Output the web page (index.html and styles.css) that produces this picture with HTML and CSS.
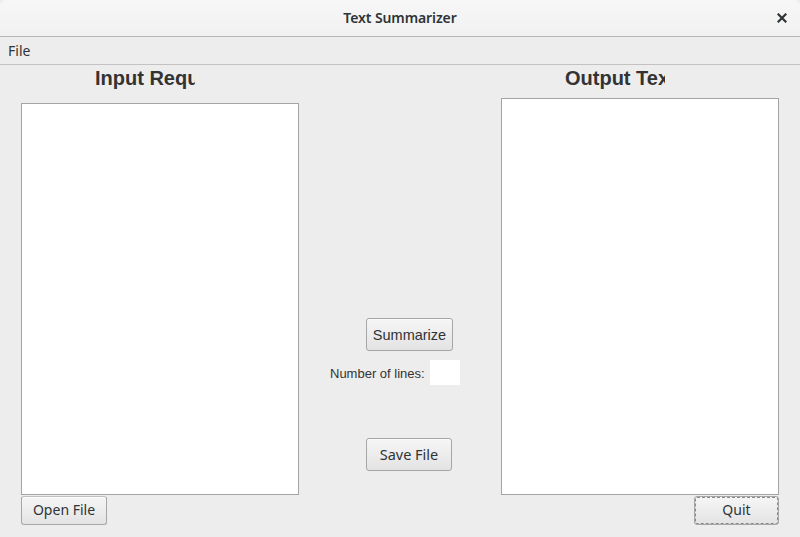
FILE: index.html
```html
<!DOCTYPE html>
<html>
<head>
<meta charset="utf-8">
<link rel="stylesheet" href="styles.css">
</head>
<body>
<div class="window">
  <div class="titlebar">
    <span class="title">Text Summarizer</span>
    <span class="close">
      <svg width="10" height="10" viewBox="0 0 10 10"><path d="M1.5 1.5 L8.5 8.5 M8.5 1.5 L1.5 8.5" stroke="#2e3436" stroke-width="2.2" stroke-linecap="square"/></svg>
    </span>
  </div>
  <div class="menubar"><span class="menu-item">File</span></div>
  <div class="main">
    <div class="col col-left">
      <div class="label label-in"><span>Input Request</span></div>
      <div class="textbox textbox-in"></div>
      <div class="btn btn-open">Open File</div>
    </div>
    <div class="col col-mid">
      <div class="btn btn-summ">Summarize</div>
      <div class="lines-row">
        <span class="lines-label">Number of lines:</span>
        <span class="lines-input"></span>
      </div>
      <div class="btn btn-save">Save File</div>
    </div>
    <div class="col col-right">
      <div class="label label-out"><span>Output Text</span></div>
      <div class="textbox textbox-out"></div>
      <div class="btn btn-quit">Quit</div>
    </div>
  </div>
</div>
</body>
</html>
```
FILE: styles.css
```css
* { box-sizing: border-box; }
html, body { margin: 0; padding: 0; }
body {
  width: 800px;
  height: 537px;
  overflow: hidden;
  background: #ededed;
  font-family: "Noto Sans", "DejaVu Sans", sans-serif;
  color: #2e3436;
}
.window {
  width: 800px;
  height: 537px;
  background: #ededed;
}
.titlebar {
  height: 37px;
  background: linear-gradient(#f7f7f7, #f1f1f1);
  border-bottom: 1px solid #b8b8b8;
  border-radius: 6px 6px 0 0;
  display: flex;
  align-items: center;
  justify-content: center;
  position: relative;
}
.title {
  font-size: 14px;
  font-weight: 600;
  color: #2e3436;
  letter-spacing: -0.1px;
  margin-top: -1px;
}
.close {
  position: absolute;
  right: 13px;
  top: 13px;
  width: 10px;
  height: 10px;
  display: flex;
}
.menubar {
  height: 28px;
  border-bottom: 1px solid #c2c2c2;
  display: flex;
  align-items: center;
  padding-left: 8px;
  background: #ededed;
}
.menu-item {
  font-size: 14px;
  color: #2e3436;
}
.main {
  display: flex;
  padding-left: 21px;
}
.col { display: flex; flex-direction: column; }
.col-left, .col-right { width: 278px; }
.col-mid { width: 202px; }
.label {
  width: 100px;
  height: 26px;
  line-height: 26px;
  overflow: hidden;
  white-space: nowrap;
  margin-top: 0;
  font-family: "Liberation Sans", Arial, sans-serif;
  font-weight: bold;
  font-size: 20px;
  color: #333333;
}
.label-in { margin-left: 74px; }
.label-out { margin-left: 64px; }
.textbox {
  background: #ffffff;
  border: 1px solid #a4a4a4;
  width: 278px;
}
.textbox-in { margin-top: 12px; height: 392px; }
.textbox-out { margin-top: 7px; height: 397px; }
.btn {
  display: flex;
  align-items: center;
  justify-content: center;
  border: 1px solid #a6a6a6;
  border-radius: 3px;
  background: linear-gradient(#f6f6f6, #e3e3e3);
  font-size: 14px;
  color: #2e3436;
  box-shadow: 0 1px 0 rgba(255,255,255,0.6) inset;
}
.btn-open {
  width: 86px;
  height: 29px;
  margin-top: 1px;
  border-top-color: #c0c0c0;
  padding-bottom: 2px;
}
.btn-quit {
  width: 85px;
  height: 29px;
  margin-top: 1px;
  margin-left: 193px;
  outline: 1px dashed #8a8a8a;
  outline-offset: -2px;
  padding-bottom: 2px;
}
.btn-summ {
  width: 87px;
  height: 33px;
  margin-top: 253px;
  margin-left: 67px;
  font-family: "Liberation Sans", Arial, sans-serif;
  font-size: 14.5px;
}
.lines-row {
  display: flex;
  align-items: center;
  margin-top: 9px;
  margin-left: 31px;
  height: 25px;
}
.lines-label {
  font-family: "Liberation Sans", Arial, sans-serif;
  font-size: 13px;
  color: #333333;
  width: 100px;
  margin-top: 1px;
}
.lines-input {
  width: 30px;
  height: 25px;
  background: #ffffff;
}
.btn-save {
  width: 86px;
  height: 33px;
  margin-top: 53px;
  margin-left: 67px;
  font-size: 14.5px;
  padding-bottom: 1px;
}
```
